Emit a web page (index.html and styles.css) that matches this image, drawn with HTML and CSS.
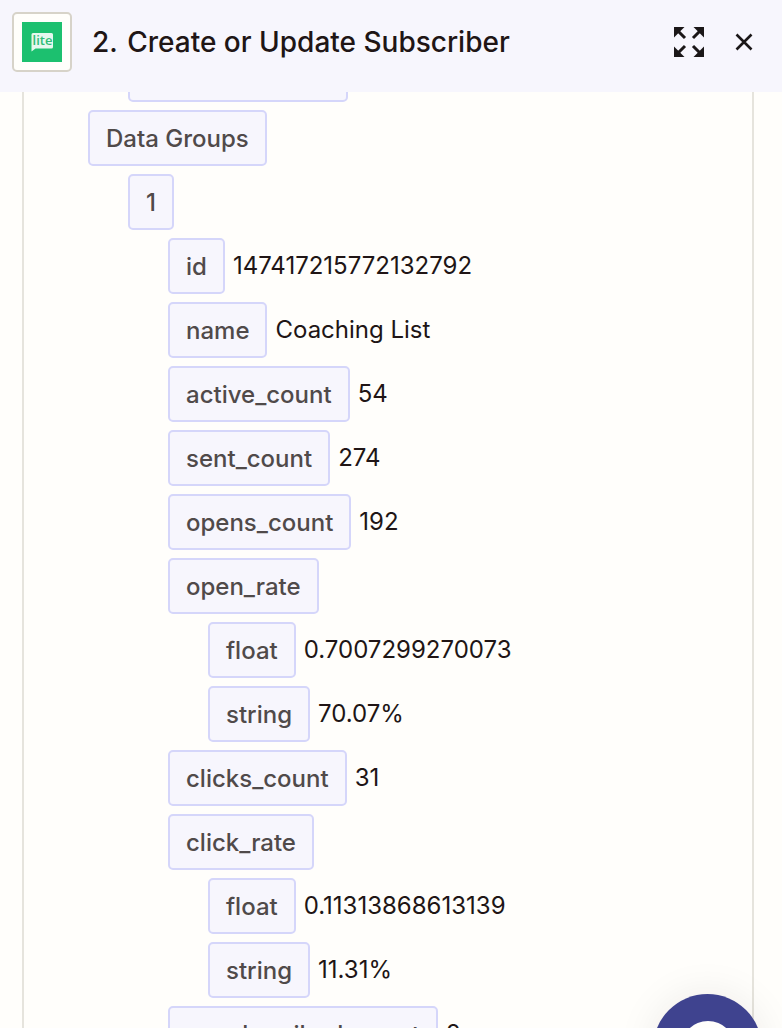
FILE: index.html
```html
<!DOCTYPE html>
<html lang="en">
<head>
<meta charset="utf-8">
<title>Create or Update Subscriber</title>
<link rel="stylesheet" href="styles.css">
</head>
<body>
<div class="app">
  <header class="header">
    <div class="logo-box">
      <div class="logo">
        <svg class="logo-svg" viewBox="0 0 40 40" width="40" height="40">
          <path d="M11 11h18.500a1.500 1.500 0 0 1 1.500 1.500v12.500a1.500 1.500 0 0 1-1.500 1.500H13.500L9.500 29.500V12.500A1.500 1.500 0 0 1 11 11z" fill="#e6f8ee"/>
          <text x="20.500" y="23" text-anchor="middle" class="logo-text">lite</text>
        </svg>
      </div>
    </div>
    <h1 class="title"><span class="num">2.</span> Create or Update Subscriber</h1>
    <svg class="icon-expand" viewBox="0 0 30 30" width="30" height="30" fill="#1b1718" stroke="#1b1718" stroke-width="3">
      <path stroke="none" d="M0 0h10.500L0 10.500z"/>
      <path stroke="none" d="M30 0H19.500L30 10.500z"/>
      <path stroke="none" d="M0 30h10.500L0 19.500z"/>
      <path stroke="none" d="M30 30H19.500L30 19.500z"/>
      <path fill="none" d="M2 2l9 9M28 2l-9 9M2 28l9-9M28 28l-9-9"/>
    </svg>
    <svg class="icon-close" viewBox="0 0 18 18" width="18" height="18" fill="none" stroke="#1b1718" stroke-width="2.600">
      <path d="M1.500 1.500l15 15M16.500 1.500l-15 15"/>
    </svg>
  </header>
  <main class="viewport">
    <div class="panel">
      <div class="row l1"><span class="chip chip-cut"></span></div>
      <div class="row l0"><span class="chip">Data Groups</span></div>
      <div class="row l1"><span class="chip">1</span></div>
      <div class="row l2"><span class="chip">id</span><span class="val">147417215772132792</span></div>
      <div class="row l2"><span class="chip">name</span><span class="val">Coaching List</span></div>
      <div class="row l2"><span class="chip">active_count</span><span class="val">54</span></div>
      <div class="row l2"><span class="chip">sent_count</span><span class="val">274</span></div>
      <div class="row l2"><span class="chip">opens_count</span><span class="val">192</span></div>
      <div class="row l2"><span class="chip">open_rate</span></div>
      <div class="row l3"><span class="chip">float</span><span class="val">0.7007299270073</span></div>
      <div class="row l3"><span class="chip">string</span><span class="val">70.07%</span></div>
      <div class="row l2"><span class="chip">clicks_count</span><span class="val">31</span></div>
      <div class="row l2"><span class="chip">click_rate</span></div>
      <div class="row l3"><span class="chip">float</span><span class="val">0.11313868613139</span></div>
      <div class="row l3"><span class="chip">string</span><span class="val">11.31%</span></div>
      <div class="row l2"><span class="chip">unsubscribed_count</span><span class="val">2</span></div>
    </div>
  </main>
  <div class="fab"><span class="fab-dot"></span></div>
</div>
</body>
</html>
```
FILE: styles.css
```css
* { box-sizing: border-box; }
html, body { margin: 0; height: 100%; overflow: hidden; }
body {
  font-family: Inter, "Liberation Sans", sans-serif;
  background: #fffefb;
  color: #201515;
}
.app {
  position: relative;
  display: flex;
  flex-direction: column;
  height: 1028px;
  overflow: hidden;
}
.header {
  flex: none;
  height: 92px;
  background: #f7f6fd;
  display: flex;
  align-items: center;
  padding: 0 29px 8px 12px;
  position: relative;
  z-index: 1;
}
.logo-box {
  width: 60px;
  height: 60px;
  background: #fffefb;
  border: 2px solid #d7d3c9;
  border-radius: 5px;
  display: flex;
  align-items: center;
  justify-content: center;
}
.logo { width: 40px; height: 40px; background: #1cc06f; }
.logo-svg { display: block; }
.logo-text { font-family: "Open Sans", sans-serif; font-size: 13px; font-weight: 600; fill: #2fbd77; }
.title {
  flex: 1;
  margin: 0 0 0 20px;
  font-size: 28px;
  font-weight: 500;
  line-height: 36px;
  color: #201515;
  white-space: nowrap;
}
.num { margin-right: 2px; }
.icon-expand { flex: none; margin-right: 31px; }
.icon-close { flex: none; }
.viewport {
  flex: 1;
  min-height: 0;
  overflow: hidden;
  padding: 0 28px 0 22px;
}
.panel {
  margin-top: -46px;
  border-left: 2px solid #e6e4dd;
  border-right: 2px solid #e6e4dd;
  display: flex;
  flex-direction: column;
  gap: 8px;
}
.row { display: flex; align-items: center; height: 56px; gap: 8px; }
.l0 { padding-left: 64px; }
.l1 { padding-left: 104px; }
.l2 { padding-left: 144px; }
.l3 { padding-left: 184px; }
.chip {
  height: 56px;
  padding: 0 16px;
  background: #f7f6fd;
  border: 2px solid #d5d6fa;
  border-radius: 5px;
  font-size: 24px;
  font-weight: 500;
  line-height: 54px;
  color: #504a4a;
  white-space: nowrap;
}
.chip-cut { width: 220px; }
.val {
  font-size: 24px;
  line-height: 32px;
  color: #201515;
  white-space: nowrap;
}
.fab {
  position: absolute;
  left: 653px;
  top: 994px;
  width: 109px;
  height: 109px;
  border-radius: 50%;
  background: #3f438f;
  box-shadow: 0 0 40px rgba(32, 21, 21, 0.08);
  display: flex;
  justify-content: center;
  padding-top: 27px;
}
.fab-dot { width: 54px; height: 54px; border-radius: 50%; background: #fffefb; }
```
